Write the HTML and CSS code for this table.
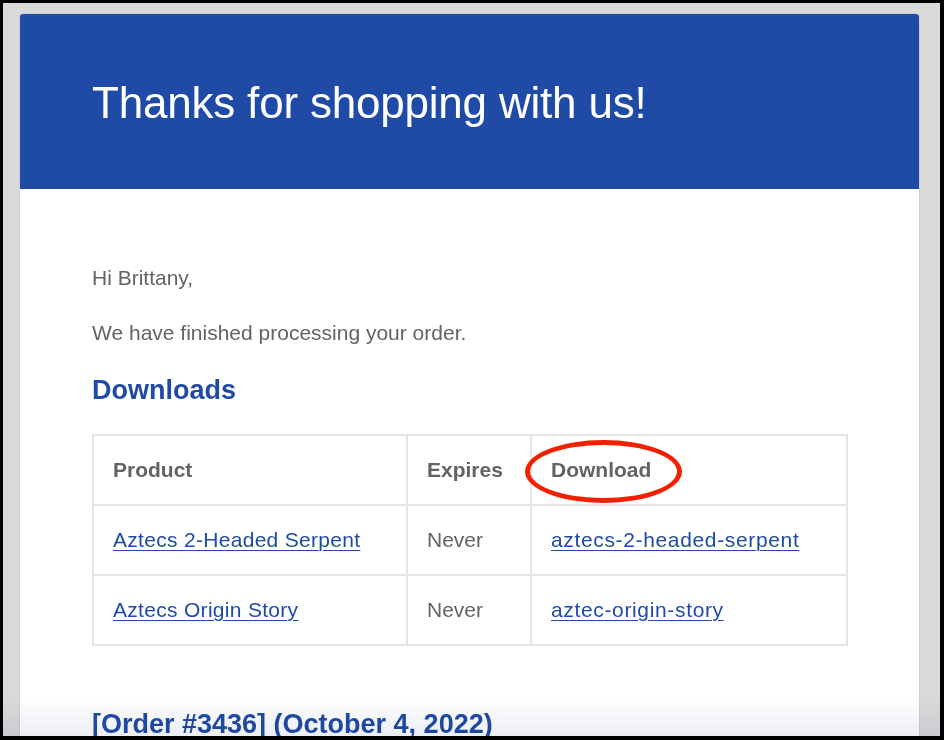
FILE: index.html
```html
<!DOCTYPE html>
<html lang="en">
<head>
<meta charset="utf-8">
<title>Thanks for shopping with us!</title>
<link rel="stylesheet" href="styles.css">
</head>
<body>
<div class="frame">
  <div class="card">
    <header class="hero">
      <h1 class="hero-title">Thanks for shopping with us!</h1>
    </header>
    <main class="content">
      <p class="text">Hi Brittany,</p>
      <p class="text">We have finished processing your order.</p>
      <h2 class="section-title">Downloads</h2>
      <table class="downloads">
        <colgroup>
          <col class="col-product">
          <col class="col-expires">
          <col class="col-download">
        </colgroup>
        <thead>
          <tr>
            <th>Product</th>
            <th>Expires</th>
            <th class="marked">Download<span class="circle"></span></th>
          </tr>
        </thead>
        <tbody>
          <tr>
            <td><a class="product-link" href="#">Aztecs 2-Headed Serpent</a></td>
            <td>Never</td>
            <td><a class="file-link" href="#">aztecs-2-headed-serpent</a></td>
          </tr>
          <tr>
            <td><a class="product-link" href="#">Aztecs Origin Story</a></td>
            <td>Never</td>
            <td><a class="file-link" href="#">aztec-origin-story</a></td>
          </tr>
        </tbody>
      </table>
      <h2 class="section-title order">[Order #3436] (October 4, 2022)</h2>
    </main>
  </div>
  <div class="fade"></div>
</div>
</body>
</html>
```

FILE: styles.css
```css
html, body {
  margin: 0;
  padding: 0;
  background: #000;
}

.frame {
  position: relative;
  box-sizing: border-box;
  width: 944px;
  height: 740px;
  border-style: solid;
  border-color: #000;
  border-width: 3px 4px 4px 3px;
  background: #dadada;
  padding: 11px 0 0 17px;
  overflow: hidden;
  font-family: "Liberation Sans", Arial, Helvetica, sans-serif;
}

.card {
  width: 899px;
  background: #fff;
  border-radius: 3px 3px 0 0;
  box-shadow: 0 0 0 1px #cfcfcf;
  overflow: hidden;
}

.hero {
  background: #1f4ba6;
  padding: 55px 72px 52px;
}

.hero-title {
  margin: 0;
  color: #fff;
  font-size: 44px;
  font-weight: 300;
  line-height: 67.5px;
  letter-spacing: -0.2px;
}

.content {
  padding: 73px 72px 40px;
  color: #636363;
}

.text {
  margin: 0 0 24px;
  font-size: 21px;
  line-height: 31.5px;
}

.section-title {
  margin: 0 0 26px;
  color: #1f4ba6;
  font-size: 27px;
  font-weight: bold;
  line-height: 35px;
}

.section-title.order {
  margin-top: 61px;
}

.downloads {
  width: 754px;
  border-collapse: collapse;
  table-layout: fixed;
  border: 2px solid #e5e5e5;
  font-size: 21px;
  color: #636363;
}

.col-product { width: 314px; }
.col-expires { width: 124px; }
.col-download { width: 316px; }

.downloads th,
.downloads td {
  border: 2px solid #e5e5e5;
  padding: 18px 19px;
  line-height: 32px;
  text-align: left;
  vertical-align: middle;
}

.downloads th {
  font-weight: bold;
}

.downloads a {
  color: #1f4ba6;
  text-decoration: underline;
  text-underline-offset: 3px;
  text-decoration-thickness: 1px;
}

.product-link {
  letter-spacing: 0.3px;
}

.file-link {
  letter-spacing: 0.65px;
}

.marked {
  position: relative;
}

.circle {
  position: absolute;
  left: -7px;
  top: 4px;
  box-sizing: border-box;
  width: 157px;
  height: 63px;
  border: 5px solid #f02000;
  border-radius: 50%;
}

.fade {
  position: absolute;
  left: 0;
  right: 0;
  bottom: 0;
  height: 40px;
  background: linear-gradient(to bottom, #ffffff, #eceef4);
  mix-blend-mode: multiply;
  pointer-events: none;
}
```
